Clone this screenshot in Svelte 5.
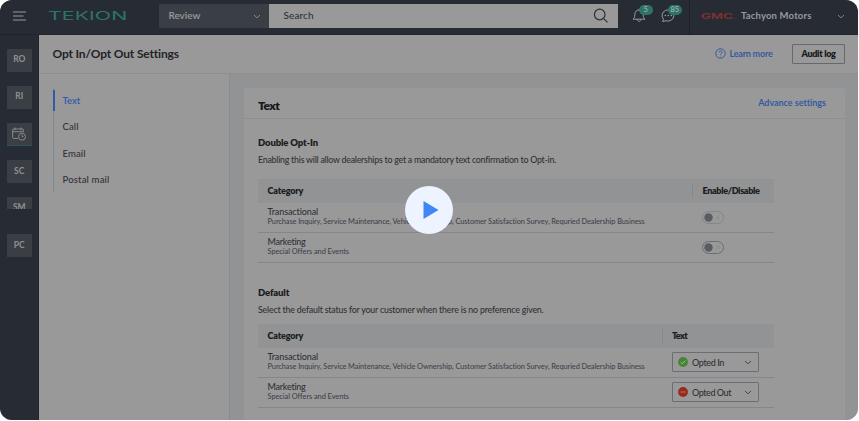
<script>
  // Tracks a label's letters out (or in) so that it fills the given width.
  function fit(node, width) {
    node.style.letterSpacing = '0px';
    const range = document.createRange();
    range.selectNodeContents(node);
    const natural = range.getBoundingClientRect().width;
    const count = node.textContent.length;
    node.style.letterSpacing = `${(width - natural) / count}px`;
  }

  const modules = ['RO', 'RI', 'calendar', 'SC', 'SM', 'PC'];
  const channels = [
    { label: 'Text', width: 17.8 },
    { label: 'Call', width: 16 },
    { label: 'Email', width: 23 },
    { label: 'Postal mail', width: 47 }
  ];
  const rows = [
    {
      title: 'Transactional',
      width: 50.8,
      detail: 'Purchase Inquiry, Service Maintenance, Vehicle Ownership, Customer Satisfaction Survey, Requried Dealership Business',
      detailWidth: 377.5,
      status: 'Opted In',
      statusWidth: 32
    },
    {
      title: 'Marketing',
      width: 38.2,
      detail: 'Special Offers and Events',
      detailWidth: 81.2,
      status: 'Opted Out',
      statusWidth: 39
    }
  ];
</script>

{#snippet chevron()}
  <svg class="chevron" width="8" height="5" viewBox="0 0 8 5"><path d="M1 1l3 2.8L7 1" /></svg>
{/snippet}

<div class="frame">
  <header class="topbar">
    <svg class="menu" width="14" height="10" viewBox="0 0 14 10"><path d="M0 1h13M0 5h10.500M0 9h13" /></svg>
    <div class="brand"><span>TEKION</span></div>
    <div class="scope"><span use:fit={31.8}>Review</span>{@render chevron()}</div>
    <div class="search">
      <span use:fit={30.2}>Search</span>
      <svg width="16" height="16" viewBox="0 0 16 16"><circle cx="6.7" cy="6.5" r="5.3" /><path d="M10.5 10.3l4 4" /></svg>
    </div>
    <div class="alerts">
      <div class="alert">
        <svg width="14" height="15" viewBox="0 0 14 15"><path d="M1 11.2h12c-1.3-1-1.8-2-1.8-4.500C11.200 3.800 9.600 2 7 2S2.800 3.800 2.800 6.700C2.800 9.200 2.300 10.200 1 11.200zM5.300 11.400c0 2.600 3.400 2.600 3.400 0M7 2V.8" /></svg>
        <b>5</b>
      </div>
      <div class="alert chat">
        <svg width="15" height="15" viewBox="0 0 15 15"><path d="M2.500 11.200A5.900 5.600 0 1 1 5 12.800L1.700 13.500z" /><path class="dots" d="M4.300 7.500h.1M7.300 7.500h.1M10.300 7.500h.1" /></svg>
        <b class="wide">85</b>
      </div>
    </div>
    <div class="dealer">
      <div class="gmc"><span>GMC</span><i>.</i></div>
      <span class="dealer-name" use:fit={70.5}>Tachyon Motors</span>
      {@render chevron()}
    </div>
  </header>

  <div class="body">
    <aside class="rail">
      {#each modules as item}
        <div class="tile" class:cut={item === 'SM'} class:active={item === 'calendar'}>
          {#if item === 'calendar'}
            <svg width="14" height="14" viewBox="0 0 14 14"><path d="M6 11.500H1.500q-.8 0-.8-.8V2.800q0-.8.8-.8h9q.8 0 .8.800V5M.7 4.700h10.600M3 .5v2.500M9 .5v2.500" /><circle cx="10" cy="9.700" r="3.500" /><path d="M10 7.700v2h1.500" /></svg>
          {:else}
            <span>{item}</span>
          {/if}
        </div>
      {/each}
    </aside>

    <main>
      <div class="page-head">
        <h1 use:fit={126}>Opt In/Opt Out Settings</h1>
        <div class="learn">
          <svg width="11" height="11" viewBox="0 0 11 11"><circle cx="5.500" cy="5.500" r="4.700" /><path d="M4.100 4.500c0-2 2.900-1.900 2.900-.1 0 1-1.500 1.100-1.500 2.200M5.500 7.700v.7" /></svg>
          <span use:fit={43}>Learn more</span>
        </div>
        <div class="audit"><span use:fit={34.2}>Audit log</span></div>
      </div>

      <div class="columns">
        <nav>
          <ul>
            {#each channels as c, i}
              <li class:selected={i === 0}><span use:fit={c.width}>{c.label}</span></li>
            {/each}
          </ul>
        </nav>

        <section class="content">
          <div class="card">
            <div class="card-head">
              <h2 use:fit={21.5}>Text</h2>
              <span use:fit={67.500}>Advance settings</span>
            </div>

            <div class="block">
              <h3><span use:fit={60}>Double Opt-In</span></h3>
              <p><span use:fit={298}>Enabling this will allow dealerships to get a mandatory text confirmation to Opt-in.</span></p>
              <div class="table">
                <div class="row head">
                  <div><b use:fit={35.8}>Category</b></div>
                  <div class="last"><b use:fit={57}>Enable/Disable</b></div>
                </div>
                {#each rows as r, i}
                  <div class="row">
                    <div class="info"><span class="title" use:fit={r.width}>{r.title}</span><span class="detail" use:fit={r.detailWidth}>{r.detail}</span></div>
                    <div class="last">
                      <svg class="toggle" class:dim={i === 0} width="22" height="13" viewBox="0 0 22 13"><rect x=".5" y=".5" width="21" height="12" rx="6" /><circle cx="6.500" cy="6.500" r="4.200" /><path d="M13.700 4.300l4.300 4.300M18 4.300l-4.300 4.300" /></svg>
                    </div>
                  </div>
                {/each}
              </div>
            </div>

            <div class="block second">
              <h3><span use:fit={31.200}>Default</span></h3>
              <p><span use:fit={285.500}>Select the default status for your customer when there is no preference given.</span></p>
              <div class="table status">
                <div class="row head">
                  <div><b use:fit={35.8}>Category</b></div>
                  <div class="last"><b use:fit={15.200}>Text</b></div>
                </div>
                {#each rows as r, i}
                  <div class="row">
                    <div class="info"><span class="title" use:fit={r.width}>{r.title}</span><span class="detail" use:fit={r.detailWidth}>{r.detail}</span></div>
                    <div class="last">
                      <div class="select">
                        <svg class="dot" class:out={i === 1} width="10" height="10" viewBox="0 0 10 10"><circle cx="5" cy="5" r="4.900" />{#if i === 0}<path d="M2.700 5.200l1.600 1.600 3-3.300" />{:else}<path d="M2.500 5h5" />{/if}</svg>
                        <span use:fit={r.statusWidth}>{r.status}</span>
                        {@render chevron()}
                      </div>
                    </div>
                  </div>
                {/each}
              </div>
            </div>
          </div>
        </section>
      </div>
    </main>
  </div>

  <button class="play" aria-label="Play">
    <svg width="16" height="18" viewBox="0 0 16 18"><path d="M.5 0L15.500 9 .5 18z" /></svg>
  </button>
</div>

<style>
  :global(body) { background: #fff; overflow: hidden; }
  .frame {
    position: relative;
    width: 858px;
    height: 420px;
    display: flex;
    flex-direction: column;
    overflow: hidden;
    border-radius: 12px;
    background: #999;
    font-family: Lato, "Open Sans", sans-serif;
    font-size: 9.5px;
    font-weight: 500;
    color: #303236;
    white-space: nowrap;
  }
  * { box-sizing: border-box; }
  svg { flex: none; display: block; fill: none; stroke: currentColor; }
  h1, h2, h3, p, ul { margin: 0; padding: 0; list-style: none; }
  .chevron { stroke-width: .8; }

  .topbar {
    flex: none;
    height: 35px;
    display: flex;
    background: #272b34;
    color: #989a9d;
    border-bottom: 1px solid #20232a;
  }
  .menu { margin: 11px 0 0 13px; stroke-width: 1.2; }
  .brand { width: 78px; margin: 8px 0 0 20.500px; height: 16px; color: #2b7565; }
  .brand span {
    display: block;
    width: max-content;
    font: 400 11.5px/16px Inter, sans-serif;
    transform: scaleX(1.86);
    transform-origin: 0 0;
  }
  .scope {
    width: 109.5px;
    height: 24px;
    margin: 4px 0 0 33.500px;
    padding: 0 8px 0 9.5px;
    display: flex;
    align-items: center;
    justify-content: space-between;
    background: #3a3f46;
    font-size: 10px;
    font-weight: 600;
  }
  .scope span, .search span { position: relative; top: -1.500px; }
  .search {
    width: 349px;
    height: 24px;
    margin: 4px 0 0 .5px;
    padding: 0 9px 0 14.500px;
    display: flex;
    align-items: center;
    justify-content: space-between;
    background: #999;
    color: #303237;
    font-size: 10px;
  }
  .search svg { stroke-width: 1.200; }
  .alerts { width: 71.500px; height: 35px; padding: 8px 0 0 14px; display: flex; gap: 14.500px; border-right: 1px solid #1c2027; }
  .alert { position: relative; width: 14px; }
  .alert b {
    position: absolute;
    left: 7px;
    top: -3px;
    width: 13.500px;
    height: 10px;
    border-radius: 5px;
    background: #2d7466;
    color: #a3b6b2;
    font-size: 7.500px;
    font-weight: 500;
    line-height: 9px;
    text-align: center;
  }
  .alert .wide { width: 14.500px; }
  .dots { stroke-width: 1.600; stroke-linecap: round; }
  .dealer { flex: 1; display: flex; align-items: center; padding: 0 13px 4px 11px; }
  .gmc { width: 40.500px; height: 10px; display: flex; color: #7c302f; }
  .gmc span {
    width: 32px;
    font: 700 8px/12px Inter, sans-serif;
    transform: scaleX(1.640);
    transform-origin: 0 0;
  }
  .gmc i { font: 9px/12px Inter, sans-serif; }
  .dealer-name { font-size: 9.500px; font-weight: 700; }
  .dealer .chevron { margin: 3px 0 0 auto; }

  .body { flex: 1; min-height: 0; display: flex; }
  .rail { width: 38.500px; padding: 14px 0 0 7px; background: #272b34; border-right: 1px solid #202328; }
  .tile {
    width: 24.500px;
    height: 23px;
    margin-bottom: 14.100px;
    display: flex;
    align-items: center;
    justify-content: center;
    background: #3a3f46;
    color: #8e9193;
    font-size: 8.500px;
    font-weight: 700;
  }
  .tile span { margin-top: -2.500px; }
  .tile svg { stroke-width: .9; margin-top: -1px; }
  .active { border-bottom: 1px solid #31545a; }
  .cut { height: 12px; margin-bottom: 25.100px; align-items: flex-start; overflow: hidden; }
  .cut span { margin-top: 4.800px; }

  main { flex: 1; min-width: 0; display: flex; flex-direction: column; }
  .page-head {
    flex: none;
    height: 38.500px;
    display: flex;
    align-items: center;
    padding: 0 13px 0 14px;
    border-bottom: 1.500px solid #8e8f91;
  }
  h1 { font-size: 12px; font-weight: 700; color: #222327; }
  .learn { margin-left: auto; display: flex; align-items: center; gap: 4px; color: #355b9f; font-size: 9px; font-weight: 700; }
  .audit {
    width: 53px;
    height: 20px;
    margin-left: 19.500px;
    display: flex;
    align-items: center;
    justify-content: center;
    border: 1px solid #66686d;
    border-radius: 1px;
    color: #18191b;
    font-size: 9px;
    font-weight: 800;
  }

  .columns { flex: 1; min-height: 0; display: flex; }
  nav { width: 191px; padding: 14px 0 0 14.500px; border-right: 1px solid #898b8d; }
  ul { height: 104.500px; border-left: 1.500px solid #858689; }
  li { position: relative; height: 26.300px; padding-left: 8.500px; line-height: 26px; }
  li span { position: relative; top: .5px; }
  .selected { color: #305ba8; font-weight: 600; }
  .selected::before { content: ""; position: absolute; left: -1.500px; top: 2px; width: 2.500px; height: 21.500px; background: #2e5bab; }

  .content { flex: 1; padding: 14.500px 13px 0 14.500px; background: #929395; }
  .card { height: 340px; background: #999; border-radius: 2px 2px 0 0; }
  .card-head {
    height: 30.500px;
    padding: 0 19px 0 14px;
    display: flex;
    justify-content: space-between;
    border-bottom: 1px solid #8c8d8f;
  }
  h2 { font-size: 12px; font-weight: 800; line-height: 35px; color: #17181a; }
  .card-head span { color: #355b9f; font-size: 9px; font-weight: 700; line-height: 30px; }
  .block { padding: 17.500px 0 0 14px; }
  .second { padding-top: 23.500px; }
  h3 { height: 14px; font-size: 9.500px; font-weight: 800; line-height: 14px; color: #1c1d20; }
  p { height: 13px; margin-top: 3px; font-size: 8.800px; line-height: 13px; }
  .second p { margin-top: 2.500px; }
  .table { width: 515.500px; margin-top: 13px; }
  .second .table { margin-top: 8.500px; }
  .row {
    height: 30px;
    display: flex;
    justify-content: space-between;
    align-items: center;
    padding-left: 9.500px;
    border-bottom: 1px solid #858689;
  }
  .head { height: 23.500px; border: 0; background: #919395; color: #1c1d20; }
  .head b { font-size: 9px; font-weight: 800; }
  .last { width: 81.500px; height: 100%; display: flex; align-items: center; padding-left: 10px; }
  .status .last { width: 111.500px; padding-left: 9.500px; }
  .head .last { height: 14px; border-left: 1px solid #858789; }
  .head .last b { margin-left: -.5px; }
  .info { display: flex; flex-direction: column; align-items: flex-start; }
  .title { font-size: 9px; line-height: 10px; }
  .detail { font-size: 7.400px; line-height: 10px; color: #42444c; }
  .toggle { color: #6c6e73; }
  .toggle circle { fill: #5a5c64; stroke: none; }
  .toggle path { stroke: #858689; stroke-width: .8; }
  .toggle.dim { color: #858689; }
  .select {
    width: 87.500px;
    height: 19.500px;
    padding: 0 6px 0 5px;
    display: flex;
    align-items: center;
    border: 1px solid #6c6e75;
    border-radius: 1px;
  }
  .select span { margin-left: 4.500px; font-size: 9px; }
  .select .chevron { margin-left: auto; }
  .dot circle { fill: #478436; stroke: none; }
  .dot path { stroke: #a3b49e; stroke-width: 1; }
  .dot.out circle { fill: #99291b; }
  .dot.out path { stroke: #b17a73; }

  .play {
    position: absolute;
    left: 405px;
    top: 186px;
    width: 48px;
    height: 48px;
    display: flex;
    align-items: center;
    justify-content: center;
    padding: 0 0 0 3px;
    border: 0;
    border-radius: 50%;
    background: #edf3ff;
  }
  .play path { fill: #4285f4; stroke: none; }
</style>
